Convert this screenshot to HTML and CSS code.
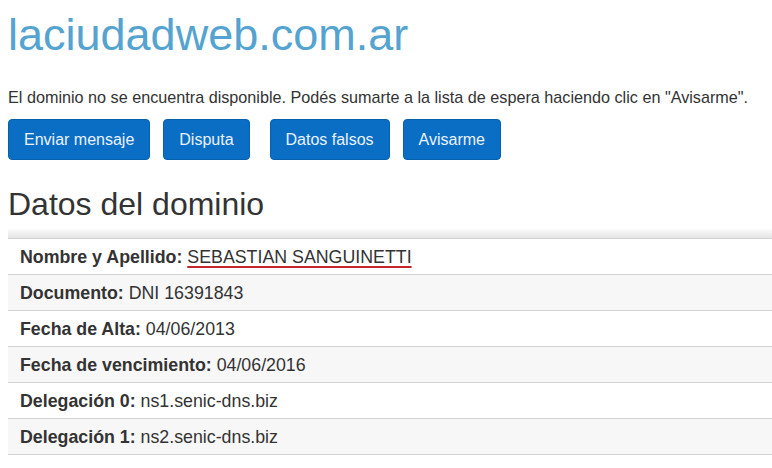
FILE: index.html
```html
<!DOCTYPE html>
<html lang="es">
<head>
<meta charset="utf-8">
<title>laciudadweb.com.ar</title>
<link rel="stylesheet" href="styles.css">
</head>
<body>
<h1 class="domain">laciudadweb.com.ar</h1>
<p class="notice">El dominio no se encuentra disponible. Podés sumarte a la lista de espera haciendo clic en "Avisarme".</p>
<div class="actions">
  <div class="group">
    <button class="btn">Enviar mensaje</button>
    <button class="btn">Disputa</button>
  </div>
  <div class="group">
    <button class="btn">Datos falsos</button>
    <button class="btn">Avisarme</button>
  </div>
</div>
<h2 class="section-title">Datos del dominio</h2>
<div class="table">
  <div class="table-head"></div>
  <div class="row"><b>Nombre y Apellido:</b> <span class="flag">SEBASTIAN SANGUINETTI</span></div>
  <div class="row alt"><b>Documento:</b> DNI 16391843</div>
  <div class="row"><b>Fecha de Alta:</b> 04/06/2013</div>
  <div class="row alt"><b>Fecha de vencimiento:</b> 04/06/2016</div>
  <div class="row"><b>Delegación 0:</b> ns1.senic-dns.biz</div>
  <div class="row alt"><b>Delegación 1:</b> ns2.senic-dns.biz</div>
</div>
</body>
</html>
```
FILE: styles.css
```css
html, body {
  background: #fff;
}
body {
  margin: 0 0 0 8px;
  font-family: "Liberation Sans", Arial, sans-serif;
  color: #333;
}
.domain {
  margin: 11px 0 0;
  font-size: 45px;
  line-height: 48px;
  font-weight: normal;
  color: #54a3d0;
}
.notice {
  margin: 28px 0 0;
  font-size: 16.2px;
  line-height: 20px;
}
.actions {
  display: flex;
  gap: 20px;
  margin-top: 12px;
}
.group {
  display: flex;
  gap: 13px;
}
.btn {
  font-family: "Liberation Sans", Arial, sans-serif;
  font-size: 16px;
  line-height: 21px;
  padding: 9px 15px;
  color: #eaf2ff;
  background: #0a6ec4;
  border: 1px solid #0860ad;
  border-radius: 4px;
}
.section-title {
  margin: 27px 0 0;
  font-size: 32px;
  line-height: 34px;
  font-weight: normal;
  color: #333;
}
.table {
  margin-top: 8px;
}
.table-head {
  height: 9px;
  background: linear-gradient(to bottom, #fbfbfb, #e5e5e5);
}
.row {
  border-top: 1px solid #d2d2d2;
  padding: 8px 12px 7px;
  font-size: 17.8px;
  line-height: 20px;
  background: #fff;
}
.row:last-child {
  border-bottom: 1px solid #d2d2d2;
}
.row.alt {
  background: #f7f7f7;
}
.row b {
  color: #333;
}
.flag {
  text-decoration: underline;
  text-decoration-color: #c4262c;
  text-decoration-thickness: 2px;
  text-underline-offset: 3px;
}
```
